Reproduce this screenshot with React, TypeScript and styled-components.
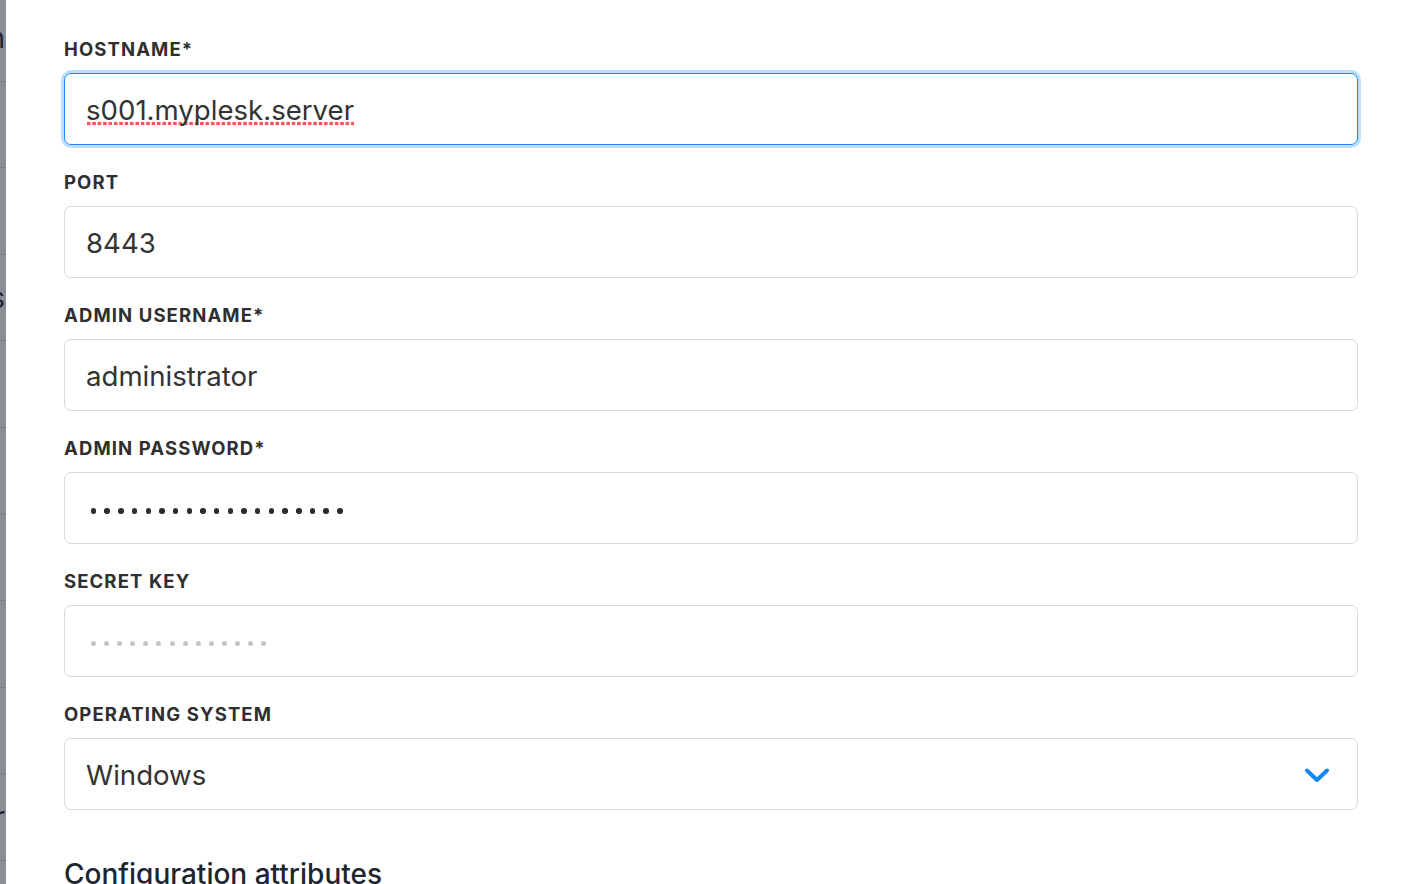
import React from "react";
import styled, { createGlobalStyle } from "styled-components";

const Global = createGlobalStyle`
  html, body { margin: 0; padding: 0; background: #ffffff; }
  body { font-family: Inter, "Noto Sans", sans-serif; overflow: hidden; }
  * { box-sizing: border-box; }
`;

const Page = styled.div`
  display: flex;
  width: 1416px;
  height: 884px;
  overflow: hidden;
`;

const Backdrop = styled.div`
  width: 6px;
  flex: 0 0 6px;
  background: #8b8e95;
  overflow: hidden;
  display: flex;
  flex-direction: column;
  margin-top: -5px;
`;

const BackdropRow = styled.div`
  flex: 0 0 86.6px;
  border-bottom: 1px solid #7b7e85;
  display: flex;
  align-items: center;
  justify-content: flex-end;
  white-space: nowrap;
  font-size: 28px;
  color: #1e2530;
  padding-right: 1px;
`;

const Panel = styled.main`
  flex: 1;
  background: #ffffff;
  padding: 36px 58px 0 58px;
  display: flex;
  flex-direction: column;
  gap: 24px;
`;

const Group = styled.div`
  display: flex;
  flex-direction: column;
  gap: 13px;
`;

const Label = styled.label`
  display: block;
  height: 24px;
  padding-top: 2px;
  line-height: 22px;
  font-size: 18.5px;
  font-weight: 700;
  letter-spacing: 0.06em;
  color: #2f2f2f;
  text-transform: uppercase;
`;

const Field = styled.div<{ $focused?: boolean }>`
  height: 72px;
  border-radius: 7px;
  border: 1px solid ${(p) => (p.$focused ? "#1c8cf9" : "#d8d8d8")};
  box-shadow: ${(p) => (p.$focused ? "0 0 0 3px #bcdfff" : "none")};
  background: #ffffff;
  display: flex;
  align-items: center;
  padding: 2px 28px 0 21px;
  font-size: 27.6px;
  color: #333333;
`;

const Value = styled.span<{ $misspelled?: boolean }>`
  white-space: nowrap;
  ${(p) =>
    p.$misspelled
      ? `
    background-image: radial-gradient(circle, #f2585d 1.7px, transparent 2.1px);
    background-size: 5.4px 5px;
    background-repeat: repeat-x;
    background-position: 0 calc(100% - 1px);
  `
      : ""}
`;

const Dots = styled.div<{ $gap: number; $size: number; $color: string; $shift: number }>`
  display: flex;
  align-items: center;
  gap: ${(p) => p.$gap}px;
  margin-left: ${(p) => 7.5 - p.$size / 2}px;
  transform: translateY(${(p) => p.$shift}px);
  span {
    flex: 0 0 auto;
    width: ${(p) => p.$size}px;
    height: ${(p) => p.$size}px;
    border-radius: 50%;
    background: ${(p) => p.$color};
  }
`;

const Select = styled(Field)`
  justify-content: space-between;
  padding-right: 27px;
`;

const ChevronIcon = styled.svg`
  flex: 0 0 auto;
`;

const Heading = styled.h2`
  margin: 22px 0 0 0;
  font-size: 28px;
  line-height: 36px;
  font-weight: 500;
  color: #1c2631;
`;

const Chevron = () => (
  <ChevronIcon width="26" height="16" viewBox="0 0 26 16" fill="none">
    <path d="M3 3.5 L13 13 L23 3.5" stroke="#1787f4" strokeWidth="4" strokeLinecap="round" strokeLinejoin="round" />
  </ChevronIcon>
);

const MaskDots = ({ count, gap, size, color, shift }: { count: number; gap: number; size: number; color: string; shift: number }) => (
  <Dots $gap={gap} $size={size} $color={color} $shift={shift}>
    {Array.from({ length: count }).map((_, i) => (
      <span key={i} />
    ))}
  </Dots>
);

const backdropRows = ["Domain", "Plans", "Hosts", "Servers", "Clients", "Backups", "Reports", "Mail", "Files", "Server", "Users"];

export default function App() {
  return (
    <>
      <Global />
      <Page>
        <Backdrop>
          {backdropRows.map((t, i) => (
            <BackdropRow key={i}>{i === 0 || i === 3 || i === 9 ? t : ""}</BackdropRow>
          ))}
        </Backdrop>
        <Panel>
          <Group>
            <Label>Hostname*</Label>
            <Field $focused>
              <Value $misspelled>s001.myplesk.server</Value>
            </Field>
          </Group>
          <Group>
            <Label>Port</Label>
            <Field>
              <Value>8443</Value>
            </Field>
          </Group>
          <Group>
            <Label>Admin username*</Label>
            <Field>
              <Value>administrator</Value>
            </Field>
          </Group>
          <Group>
            <Label>Admin password*</Label>
            <Field>
              <MaskDots count={19} gap={13.7 - 5.4} size={5.4} color="#2c2c2c" shift={2} />
            </Field>
          </Group>
          <Group>
            <Label>Secret key</Label>
            <Field>
              <MaskDots count={14} gap={13.1 - 5} size={5} color="#c4c4c4" shift={1} />
            </Field>
          </Group>
          <Group>
            <Label>Operating system</Label>
            <Select>
              <Value>Windows</Value>
              <Chevron />
            </Select>
          </Group>
          <Heading>Configuration attributes</Heading>
        </Panel>
      </Page>
    </>
  );
}
